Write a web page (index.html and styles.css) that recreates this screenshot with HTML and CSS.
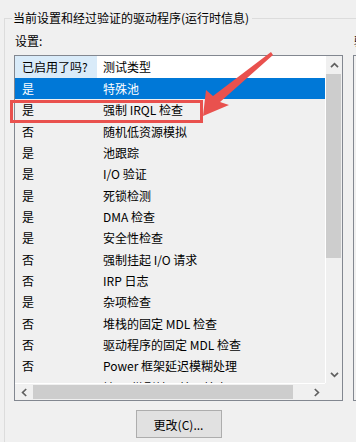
FILE: index.html
```html
<!DOCTYPE html>
<html lang="zh-CN">
<head>
<meta charset="utf-8">
<title>驱动程序验证程序</title>
<link rel="stylesheet" href="styles.css">
</head>
<body>
<div class="page">
  <div class="gtitle">
    <span class="gcorner"></span>
    <span class="gtext">当前设置和经过验证的驱动程序(运行时信息)</span>
    <span class="gline"></span>
  </div>
  <div class="gbody">
    <div class="col-main">
      <div class="label">设置:</div>
      <div class="listbox">
        <div class="lv">
          <div class="lv-head">
            <div class="hcell hcell-hot">已启用了吗?</div>
            <div class="hcell">测试类型</div>
          </div>
          <div class="row sel"><span class="c1">是</span><span class="c2">特殊池</span></div>
          <div class="row"><span class="c1">是</span><span class="c2">强制 IRQL 检查</span></div>
          <div class="row"><span class="c1">否</span><span class="c2">随机低资源模拟</span></div>
          <div class="row"><span class="c1">是</span><span class="c2">池跟踪</span></div>
          <div class="row"><span class="c1">是</span><span class="c2">I/O 验证</span></div>
          <div class="row"><span class="c1">是</span><span class="c2">死锁检测</span></div>
          <div class="row"><span class="c1">是</span><span class="c2">DMA 检查</span></div>
          <div class="row"><span class="c1">是</span><span class="c2">安全性检查</span></div>
          <div class="row"><span class="c1">否</span><span class="c2">强制挂起 I/O 请求</span></div>
          <div class="row"><span class="c1">否</span><span class="c2">IRP 日志</span></div>
          <div class="row"><span class="c1">是</span><span class="c2">杂项检查</span></div>
          <div class="row"><span class="c1">否</span><span class="c2">堆栈的固定 MDL 检查</span></div>
          <div class="row"><span class="c1">否</span><span class="c2">驱动程序的固定 MDL 检查</span></div>
          <div class="row"><span class="c1">否</span><span class="c2">Power 框架延迟模糊处理</span></div>
          <div class="row"><span class="c1">否</span><span class="c2">端口/微型端口接口检查</span></div>
        </div>
        <div class="vsb">
          <div class="sb-btn">
            <svg width="9" height="6" viewBox="0 0 9 6"><polyline points="1,5.2 4.5,1.6 8,5.2" fill="none" stroke="#606060" stroke-width="1.7"/></svg>
          </div>
          <div class="vthumb"></div>
          <div class="vtrack"></div>
          <div class="sb-btn">
            <svg width="9" height="6" viewBox="0 0 9 6"><polyline points="1,0.8 4.5,4.4 8,0.8" fill="none" stroke="#606060" stroke-width="1.7"/></svg>
          </div>
        </div>
        <div class="hsb">
          <div class="sb-btn">
            <svg width="6" height="9" viewBox="0 0 6 9"><polyline points="5.2,1 1.6,4.5 5.2,8" fill="none" stroke="#606060" stroke-width="1.7"/></svg>
          </div>
          <div class="hthumb"></div>
          <div class="htrack"></div>
          <div class="sb-btn">
            <svg width="6" height="9" viewBox="0 0 6 9"><polyline points="0.8,1 4.4,4.5 0.8,8" fill="none" stroke="#606060" stroke-width="1.7"/></svg>
          </div>
        </div>
        <div class="sb-corner"></div>
      </div>
      <div class="btnrow"><button class="btn" type="button">更改(C)...</button></div>
    </div>
    <div class="col-side">
      <div class="label">验证</div>
      <div class="sidebox"></div>
    </div>
  </div>
  <div class="callout"></div>
  <svg class="arrow" width="356" height="442" viewBox="0 0 356 442">
    <polygon points="203,116 206,90 213,96 271,52 273,55 220,102 229,105" fill="#e9514e"/>
  </svg>
</div>
</body>
</html>
```
FILE: styles.css
```css
html, body {
  margin: 0;
  padding: 0;
}

body {
  background: #f0f0f0;
  width: 356px;
  height: 442px;
  overflow: hidden;
  font-family: "Noto Sans CJK SC", "Noto Sans", sans-serif;
  font-size: 12px;
  color: #000;
}

.page {
  position: relative;
  width: 356px;
  height: 442px;
  overflow: hidden;
}

/* group box title */
.gtitle {
  display: flex;
  height: 16px;
  margin-top: 10px;
  margin-left: 4px;
  white-space: nowrap;
}

.gcorner {
  flex: none;
  width: 7px;
  height: 7px;
  margin-top: 8px;
  border-top: 1px solid #dcdcdc;
  border-left: 1px solid #dcdcdc;
}

.gtext {
  flex: none;
  line-height: 16px;
  padding: 0 3px 0 1px;
}

.gline {
  flex: 1;
  height: 1px;
  margin-top: 8px;
  background: #dcdcdc;
}

.gbody {
  margin-left: 4px;
  border-left: 1px solid #dcdcdc;
  padding-left: 9px;
  height: 416px;
  display: flex;
  gap: 10px;
}

.col-main {
  flex: none;
  width: 329px;
}

.col-side {
  flex: none;
  width: 120px;
}

.label {
  height: 16px;
  line-height: 16px;
  margin-top: 7px;
  margin-bottom: 6px;
  padding-left: 1px;
  white-space: nowrap;
}

.sidebox {
  height: 344px;
  border: 1px solid #828790;
}

/* list box */
.listbox {
  border: 1px solid #828790;
  display: grid;
  grid-template-columns: 310px 17px;
  grid-template-rows: 327px 17px;
}

.lv {
  overflow: hidden;
  background: #f0f0f0;
}

.lv-head {
  display: grid;
  grid-template-columns: 82px 1fr;
  height: 22px;
  background: #fff;
}

.hcell {
  line-height: 22px;
  padding-left: 6px;
  white-space: nowrap;
}

.hcell-hot {
  background: #d9ebf9;
  padding-left: 7px;
}

.row {
  display: grid;
  grid-template-columns: 82px 1fr;
  height: 21.33px;
  line-height: 21.33px;
  white-space: nowrap;
}

.row .c1 {
  padding-left: 7px;
}

.row .c2 {
  padding-left: 6px;
}

.row.sel {
  background: #0078d7;
  color: #fff;
}

/* scroll bars */
.vsb {
  display: flex;
  flex-direction: column;
  background: #f0f0f0;
  border-left: 1px solid #fff;
}

.vsb .sb-btn {
  height: 17px;
  display: flex;
  align-items: center;
  justify-content: center;
}

.vthumb {
  height: 184px;
  width: 15px;
  margin-top: 1px;
  background: #cdcdcd;
}

.vtrack {
  flex: 1;
}

.hsb {
  display: flex;
  background: #f0f0f0;
  border-top: 1px solid #fff;
}

.hsb .sb-btn {
  width: 17px;
  display: flex;
  align-items: center;
  justify-content: center;
}

.hthumb {
  width: 260px;
  height: 14px;
  margin-top: 1px;
  margin-left: 1px;
  background: #cdcdcd;
}

.htrack {
  flex: 1;
}

.sb-corner {
  background: #f0f0f0;
}

.btnrow {
  display: flex;
  justify-content: center;
  margin-top: 9px;
}

.btn {
  width: 86px;
  height: 28px;
  padding: 0;
  border: 1px solid #adadad;
  background: #e1e1e1;
  font: inherit;
  color: #000;
}

/* annotations */
.callout {
  position: absolute;
  left: 10px;
  top: 100px;
  width: 187px;
  height: 17px;
  border: 3px solid #e9514e;
}

.arrow {
  position: absolute;
  left: 0;
  top: 0;
}
```
